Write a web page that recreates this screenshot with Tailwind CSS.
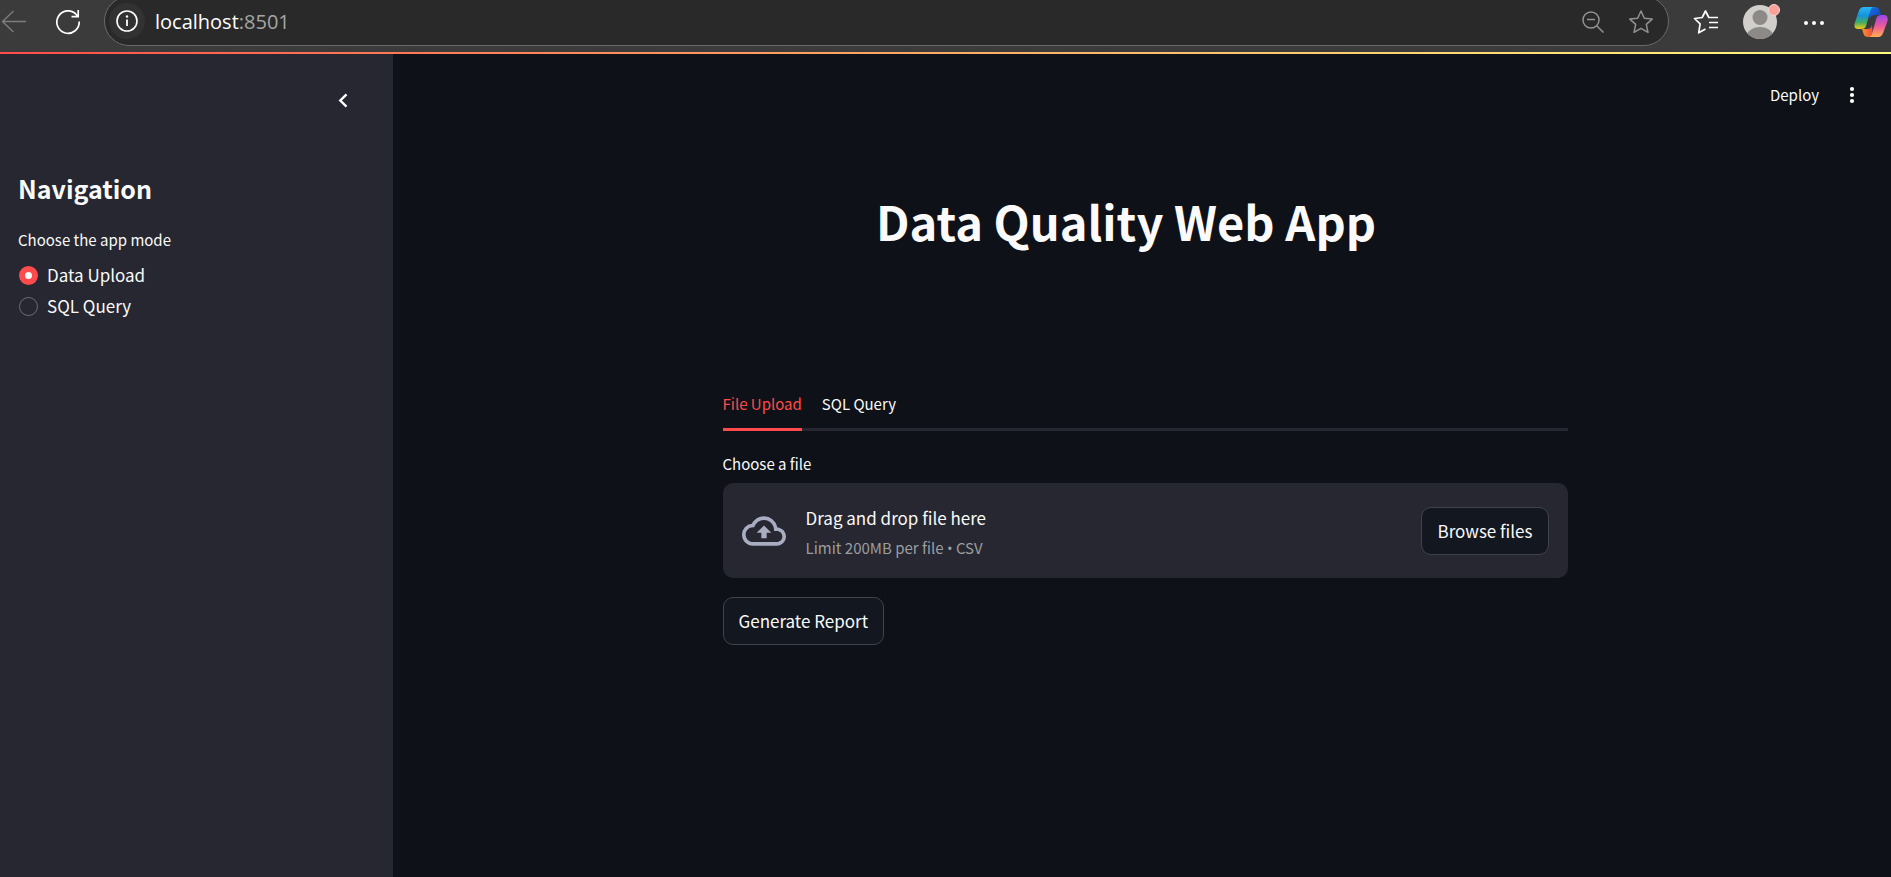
<!DOCTYPE html>
<html lang="en">
<head>
<meta charset="utf-8">
<meta name="viewport" content="width=device-width, initial-scale=1">
<title>Data Quality Web App</title>
<script src="https://cdn.jsdelivr.net/npm/@tailwindcss/browser@4"></script>
</head>
<body class="flex min-h-screen flex-col bg-[#0e1117] font-['Noto_Sans_CJK_SC','Source_Sans_Pro',sans-serif] text-[17px] leading-6 text-[#fafafa]">

<!-- Browser toolbar -->
<header class="flex h-[52px] shrink-0 items-start overflow-hidden bg-[#3b3b3b]">
  <button aria-label="Back" class="mt-2 h-7 w-7 text-[#7d7d7d]">
    <svg class="h-7 w-7" viewBox="0 0 28 28" fill="none" stroke="currentColor" stroke-width="1.4"><path d="M26 13.500H2.500M13.500 3L2.500 13.500l11 10.500"/></svg>
  </button>
  <button aria-label="Refresh" class="mt-2 ml-[26px] h-7 w-7 text-white">
    <svg class="h-7 w-7" viewBox="0 0 28 28" fill="none" stroke="currentColor" stroke-width="1.700"><path d="M25.200 13.500A11.200 11.200 0 1 1 22.500 6.800L24 8.500M24.200 2v6.700h-6.700"/></svg>
  </button>
  <div class="-mt-1 ml-[22px] flex h-[50px] min-w-0 flex-1 items-center rounded-full border border-[#6a6a6a] bg-[#292929] pl-1">
    <button aria-label="Site information" class="grid h-9 w-9 place-items-center rounded-full bg-[#323232]">
      <svg class="h-6 w-6" viewBox="0 0 24 24" fill="none" stroke="white" stroke-width="1.600"><circle cx="12" cy="12" r="10"/><path d="M12 10.500V17" stroke-width="1.800"/><circle cx="12" cy="7.500" r="1.200" fill="white" stroke="none"/></svg>
    </button>
    <a href="#" class="ml-[10px] flex-1 pt-0.5 font-['Open_Sans',sans-serif] text-[20px] leading-6 text-[#a5a5a5]"><span class="text-white">localhost</span>:8501</a>
    <button aria-label="Zoom out" class="mr-6 pt-0.5 text-[#929292]">
      <svg class="h-6 w-6" viewBox="0 0 24 24" fill="none" stroke="currentColor" stroke-width="1.500"><circle cx="10" cy="10" r="8"/><path d="M6 9.500h8M15.700 15.700L22.500 22.500"/></svg>
    </button>
    <button aria-label="Add to favorites" class="mr-[15px] pt-0.5 text-[#929292]">
      <svg class="h-6 w-6" viewBox="0 0 24 24" fill="none" stroke="currentColor" stroke-width="1.500" stroke-linejoin="round"><path d="M12 1l3.300 7.200 7.900.900-5.900 5.300 1.700 7.900-7-4-7 4 1.700-7.900L.800 9.100l7.900-.900z"/></svg>
    </button>
  </div>
  <button aria-label="Favorites" class="mt-[9px] ml-6 text-white">
    <svg class="h-[26px] w-[26px]" viewBox="0 0 26 26" fill="none" stroke="currentColor" stroke-width="1.700" stroke-linejoin="round"><path d="M25 8.500h-9.200L12.500 2 9.200 8.500l-7.700 1 5.600 5.300L5.700 23.800l6.800-3.800M16 13.500h9M16 18.500h9"/></svg>
  </button>
  <button aria-label="Profile" class="mt-[3px] ml-[23px]">
    <svg class="h-9 w-10" viewBox="0 0 40 36"><defs><clipPath id="face"><circle cx="18" cy="19" r="17"/></clipPath></defs><circle cx="18" cy="19" r="17" fill="#d0cfcb"/><g clip-path="url(#face)" fill="#8c8986"><circle cx="18" cy="14.500" r="7.500"/><ellipse cx="18" cy="34" rx="13.500" ry="10"/></g><circle cx="32" cy="7" r="5.500" fill="#faa19b" stroke="#f7d6d2"/></svg>
  </button>
  <button aria-label="Settings and more" class="mt-3 ml-5 text-white">
    <svg class="h-5 w-6" viewBox="0 0 24 20" fill="currentColor"><circle cx="4" cy="11" r="2"/><circle cx="12" cy="11" r="2"/><circle cx="20" cy="11" r="2"/></svg>
  </button>
  <button aria-label="Copilot" class="mt-1 mr-[3px] ml-7">
    <svg class="h-[34px] w-[34px]" viewBox="0 0 34 34">
      <defs>
        <linearGradient id="cl" x1="0" y1="0" x2="0" y2="1"><stop offset="0" stop-color="#27b7f4"/><stop offset=".4" stop-color="#1592dd"/><stop offset=".7" stop-color="#42ad62"/><stop offset="1" stop-color="#f2cc16"/></linearGradient>
        <linearGradient id="cr" x1="0" y1="0" x2="0" y2="1"><stop offset="0" stop-color="#9b48e8"/><stop offset=".5" stop-color="#ed589b"/><stop offset="1" stop-color="#ffae4f"/></linearGradient>
        <linearGradient id="ct" x1="0" y1="0" x2="1" y2="1"><stop offset="0" stop-color="#1778dd"/><stop offset="1" stop-color="#1637bd"/></linearGradient>
        <linearGradient id="cb" x1="0" y1="0" x2="1" y2="0"><stop offset="0" stop-color="#f89429"/><stop offset="1" stop-color="#ed4a43"/></linearGradient>
      </defs>
      <path d="M15 3h6c3 0 4 1.200 4.800 4L27 11h-6c-3 0-4.500 1.500-5.500 4z" fill="url(#ct)"/>
      <path d="M19 33h-5c-3 0-4-1.500-4.700-4L8 25h5c3 0 4-1 5-4z" fill="url(#cb)"/>
      <path d="M10 3h10c-2 0-3 1.500-3.700 4l-4 14c-.900 3-2.300 4-5.300 4H4c-3.500 0-4-3-3.200-6L4.500 8C5.500 4.500 7 3 10 3z" fill="url(#cl)"/>
      <path d="M24 33H14.500c2 0 3-1.500 3.700-4l4-14c.900-3 2.300-4 5.300-4H30c3.500 0 4.300 3 3.500 6l-4 11c-1.200 3.500-2.500 5-5.500 5z" fill="url(#cr)"/>
    </svg>
  </button>
</header>
<div class="h-0.5 shrink-0 bg-linear-to-r from-[#ff4b4b] to-[#fffd80]"></div>

<div class="flex flex-1">
  <!-- Sidebar -->
  <aside class="w-[393px] shrink-0 bg-[#262730]">
    <div class="flex justify-end pt-8 pr-9">
      <button aria-label="Collapse sidebar" class="grid h-7 w-7 place-items-center">
        <svg class="h-4 w-4" viewBox="0 0 16 16" fill="none" stroke="white" stroke-width="2.400"><path d="M11.500 2.300L5.300 8.500l6.200 6.200"/></svg>
      </button>
    </div>
    <div class="px-[18px] pt-[58px]">
      <h2 class="text-[25px] leading-8 font-bold">Navigation</h2>
      <fieldset class="mt-6">
        <legend class="text-[15px] leading-6">Choose the app mode</legend>
        <div class="mt-[11px] ml-px flex flex-col gap-[7px]">
          <label class="flex items-center gap-[9px]"><input type="radio" name="mode" checked class="h-[19px] w-[19px] appearance-none rounded-full border border-[#6b6c75] checked:border-[6px] checked:border-[#ff4b4b] checked:bg-[#fafafa]">Data Upload</label>
          <label class="flex items-center gap-[9px]"><input type="radio" name="mode" class="h-[19px] w-[19px] appearance-none rounded-full border border-[#6b6c75] checked:border-[6px] checked:border-[#ff4b4b] checked:bg-[#fafafa]">SQL Query</label>
        </div>
      </fieldset>
    </div>
  </aside>

  <!-- App -->
  <main class="min-w-0 flex-1">
    <div class="flex items-center justify-end gap-[21px] pt-[29px] pr-[27px]">
      <button class="text-[15px] leading-6">Deploy</button>
      <button aria-label="Main menu" class="grid h-6 w-6 place-items-center">
        <svg class="h-5 w-5" viewBox="0 0 20 20" fill="white"><circle cx="10" cy="4" r="2.100"/><circle cx="10" cy="10" r="2.100"/><circle cx="10" cy="16" r="2.100"/></svg>
      </button>
    </div>
    <div class="mx-auto max-w-[845px] pt-[82px] pl-1">
      <h1 class="pr-9 text-center text-[47px] leading-[64px] font-bold">Data Quality Web App</h1>
    </div>
    <div class="mx-auto w-full max-w-[851px] pt-[139px] pl-[6px]">
      <div role="tablist" class="flex gap-5 border-b-3 border-[#262730]">
        <button role="tab" aria-selected="true" class="-mb-[3px] border-b-3 border-[#ff4b4b] pb-3 text-[15px] leading-6 text-[#ff4b4b]">File Upload</button>
        <button role="tab" aria-selected="false" class="pb-3 text-[15px] leading-6">SQL Query</button>
      </div>
      <label for="file" class="mt-[21px] block text-[15px] leading-6">Choose a file</label>
      <input id="file" type="file" accept=".csv" class="sr-only">
      <section class="mt-[7px] flex items-center rounded-[10px] bg-[#262730] px-[19px] py-[18px]">
        <svg class="h-11 w-11" viewBox="0 0 24 24" fill="#a9adc1"><path d="M19.350 10.040A7.490 7.490 0 0 0 12 4C9.110 4 6.600 5.640 5.350 8.040A5.994 5.994 0 0 0 0 14c0 3.310 2.690 6 6 6h13c2.760 0 5-2.240 5-5 0-2.640-2.050-4.780-4.650-4.960zM19 18H6c-2.210 0-4-1.790-4-4s1.790-4 4-4h.710C7.370 7.690 9.480 6 12 6c3.040 0 5.500 2.460 5.500 5.500v.500H19c1.660 0 3 1.340 3 3s-1.340 3-3 3zM8 13h2.550v3h2.900v-3H16l-4-4z"/></svg>
        <div class="ml-5 flex-1">
          <p class="pt-px leading-8">Drag and drop file here</p>
          <p class="pt-0.5 text-[15px] leading-6 text-[#9c9da1]">Limit 200MB per file <span class="font-['Open_Sans']">•</span> CSV</p>
        </div>
        <button class="h-12 rounded-[10px] border border-[#41434a] bg-[#131720] px-[15px]">Browse files</button>
      </section>
      <button class="mt-[19px] h-12 rounded-[10px] border border-[#41434a] bg-[#131720] px-[15px]">Generate Report</button>
    </div>
  </main>
</div>
</body>
</html>
